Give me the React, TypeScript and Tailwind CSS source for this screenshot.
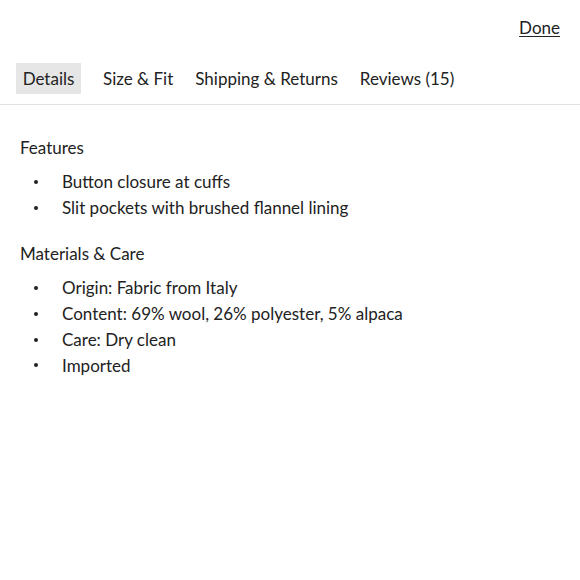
const tabs = ['Details', 'Size & Fit', 'Shipping & Returns', 'Reviews (15)']

const sections = [
  {
    title: 'Features',
    items: ['Button closure at cuffs', 'Slit pockets with brushed flannel lining'],
  },
  {
    title: 'Materials & Care',
    items: [
      'Origin: Fabric from Italy',
      'Content: 69% wool, 26% polyester, 5% alpaca',
      'Care: Dry clean',
      'Imported',
    ],
  },
]

export default function App() {
  return (
    <div className="w-[580px] h-[580px] bg-white text-[#222] font-['Lato','Liberation_Sans',sans-serif] text-[17px]">
      <div className="flex justify-end pt-[16px] pr-[20px]">
        <button className="underline underline-offset-2 leading-[24px]">Done</button>
      </div>
      <div className="flex items-center gap-[10px] px-[16px] mt-[23px] pb-[10px] border-b border-[#e2e2e2]">
        {tabs.map((t, i) => (
          <button
            key={t}
            className={
              'h-[31px] leading-[31px] ' +
              (i === 0 ? 'w-[65px] mr-[6px] bg-[#e6e6e6]' : 'px-[6px]')
            }
          >
            {t}
          </button>
        ))}
      </div>
      <div className="px-[20px] pt-[30px]">
        {sections.map((s) => (
          <div key={s.title} className="mb-[21px]">
            <h3 className="leading-[26px] mb-[8px]">{s.title}</h3>
            <ul>
              {s.items.map((it) => (
                <li key={it} className="flex items-center leading-[25.7px]">
                  <span className="w-[42px] pl-[14px] flex">
                    <span className="w-[4px] h-[4px] rounded-full bg-[#222]" />
                  </span>
                  <span>{it}</span>
                </li>
              ))}
            </ul>
          </div>
        ))}
      </div>
    </div>
  )
}
